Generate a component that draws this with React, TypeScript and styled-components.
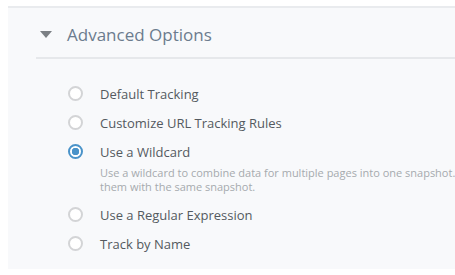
import styled, { createGlobalStyle } from "styled-components";

const GlobalStyle = createGlobalStyle`
  html, body {
    margin: 0;
    padding: 0;
    overflow: hidden;
    background: #fff;
    font-family: "Open Sans", "Liberation Sans", sans-serif;
  }
`;

const options = [
  { id: "default", label: "Default Tracking" },
  { id: "custom", label: "Customize URL Tracking Rules" },
  {
    id: "wildcard",
    label: "Use a Wildcard",
    description:
      "Use a wildcard to combine data for multiple pages into one snapshot. Label them with the same snapshot.",
  },
  { id: "regex", label: "Use a Regular Expression" },
  { id: "name", label: "Track by Name" },
];

export default function App() {
  const selected = "wildcard";
  return (
    <>
      <GlobalStyle />
      <Page>
        <Panel>
          <Header>
            <Caret />
            <Title>Advanced Options</Title>
          </Header>
          <OptionList>
            {options.map((o) => (
              <Option key={o.id}>
                <Radio checked={o.id === selected} />
                <OptionText>
                  <Label>{o.label}</Label>
                  {o.description && <Description>{o.description}</Description>}
                </OptionText>
              </Option>
            ))}
          </OptionList>
        </Panel>
      </Page>
    </>
  );
}

const Page = styled.div`
  padding: 6px 0 4px 8px;
`;

const Panel = styled.section`
  background: #f8f9fb;
  border-top: 2px solid #e9ebee;
  min-height: 263px;
  box-sizing: border-box;
`;

const Header = styled.div`
  display: flex;
  align-items: center;
  gap: 15px;
  margin-left: 28px;
  height: 51px;
  box-sizing: border-box;
  padding: 3px 0 0 4px;
  border-bottom: 2px solid #e6e8eb;
`;

const Caret = styled.span`
  width: 0;
  height: 0;
  border-left: 6px solid transparent;
  border-right: 6px solid transparent;
  border-top: 7px solid #7b7f84;
  margin-top: 1px;
`;

const Title = styled.h2`
  margin: 0;
  font-size: 17px;
  font-weight: 400;
  color: #6c7c8e;
`;

const OptionList = styled.div`
  display: flex;
  flex-direction: column;
  gap: 11px;
  padding: 26px 0 0 60px;
`;

const Option = styled.label`
  display: flex;
  align-items: flex-start;
  gap: 17px;
`;

const Radio = styled.span<{ checked: boolean }>`
  flex: none;
  width: 15px;
  height: 15px;
  margin-top: 1px;
  border-radius: 50%;
  box-sizing: border-box;
  border: 2px solid ${(p) => (p.checked ? "#4a93c9" : "#d3d4d6")};
  background: ${(p) =>
    p.checked ? "radial-gradient(circle, #4a93c9 0 3.5px, #fff 4px)" : "#fff"};
`;

const OptionText = styled.div`
  display: flex;
  flex-direction: column;
  gap: 5px;
`;

const Label = styled.span`
  font-size: 13px;
  line-height: 18px;
  color: #545a60;
`;

const Description = styled.p`
  margin: 0 0 1px;
  width: 396px;
  font-size: 11px;
  line-height: 14px;
  color: #a6aaae;
`;
